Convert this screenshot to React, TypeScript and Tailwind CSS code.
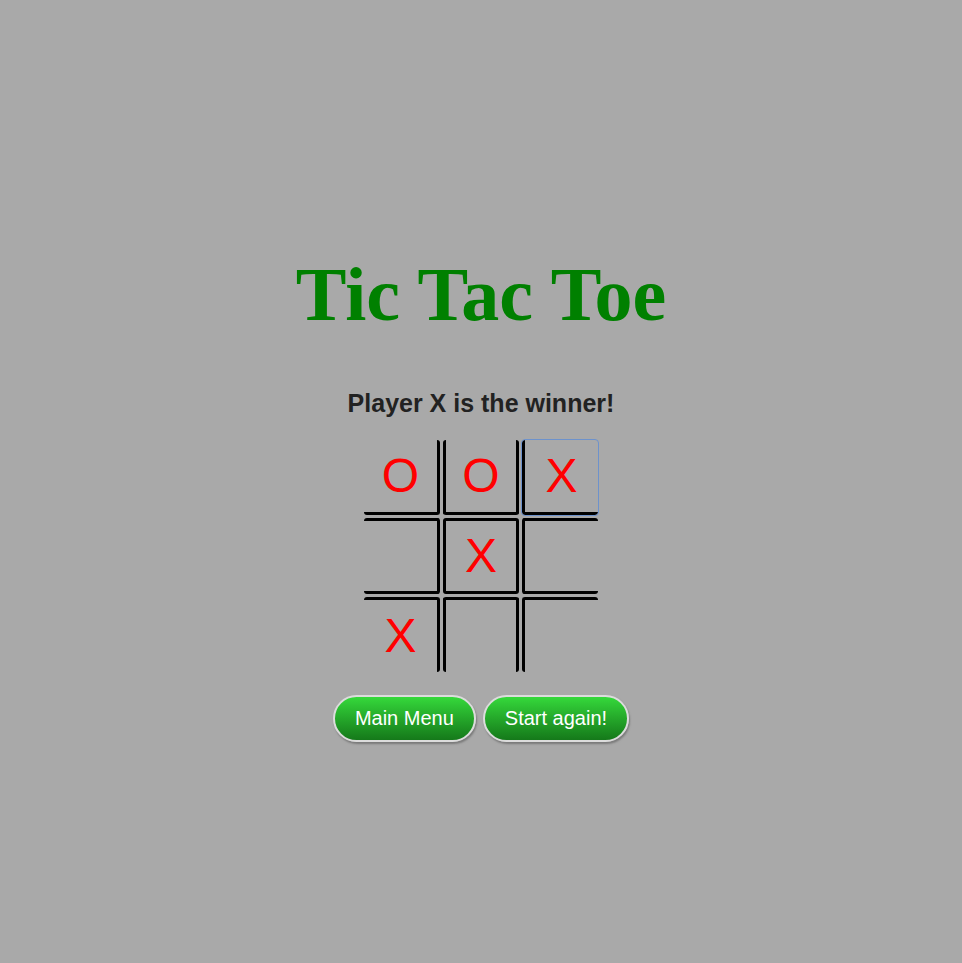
import React from "react";

type Mark = "X" | "O" | "";

const board: Mark[] = ["O", "O", "X", "", "X", "", "X", "", ""];

// which inner sides get a line, per cell
const edges = [
  "border-r-[3px] border-b-[3px]",
  "border-x-[3px] border-b-[3px]",
  "border-l-[3px] border-b-[3px]",
  "border-r-[3px] border-y-[3px]",
  "border-[3px]",
  "border-l-[3px] border-y-[3px]",
  "border-r-[3px] border-t-[3px]",
  "border-x-[3px] border-t-[3px]",
  "border-l-[3px] border-t-[3px]",
];

const App = () => {
  return (
    <div className="min-h-screen w-full bg-[#a9a9a9] flex flex-col items-center pt-[252px] font-['Liberation_Sans',Arial,sans-serif]">
      <h1 className="font-['Liberation_Serif','Times_New_Roman',serif] font-bold text-[76px] leading-[84px] text-[#008000]">
        Tic Tac Toe
      </h1>
      <p className="mt-[53px] text-[25px] leading-[28px] font-bold text-[#222222]">
        Player X is the winner!
      </p>
      <div className="mt-[23px] grid grid-cols-[76px_76px_76px] grid-rows-[75px_76px_75px] gap-[3px]">
        {board.map((mark, i) => (
          <button
            key={i}
            className={`${edges[i]} border-black rounded-[3px] flex items-center justify-center text-[48px] leading-none text-[#ff0000] ${
              i === 2 ? "outline outline-1 outline-[#6d92cc]" : ""
            }`}
          >
            {mark}
          </button>
        ))}
      </div>
      <div className="mt-[23px] flex gap-[7px]">
        <button className="rounded-full border-2 border-[#dcdcdc] bg-gradient-to-b from-[#35d93b] to-[#15791a] px-[20px] py-[10px] text-[20px] leading-[23px] text-white shadow-[1px_2px_2px_#7a7a7a]">
          Main Menu
        </button>
        <button className="rounded-full border-2 border-[#dcdcdc] bg-gradient-to-b from-[#35d93b] to-[#15791a] px-[20px] py-[10px] text-[20px] leading-[23px] text-white shadow-[1px_2px_2px_#7a7a7a]">
          Start again!
        </button>
      </div>
    </div>
  );
};

export default App;
